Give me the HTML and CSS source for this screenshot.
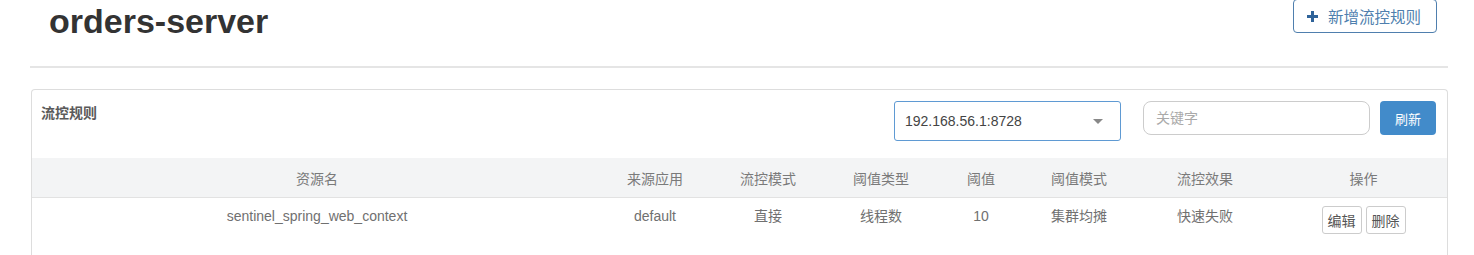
FILE: index.html
```html
<!DOCTYPE html>
<html lang="zh">
<head>
    <meta charset="UTF-8">
    <meta name="viewport" content="width=device-width, initial-scale=1.0">
    <title>orders-server - 流控规则</title>
    <link rel="stylesheet" href="styles.css">
</head>
<body>
    <div class="page-header">
        <h1 class="app-title">orders-server</h1>
        <button class="btn-outline">
            <svg class="plus-icon" width="11" height="11" viewBox="0 0 11 11" aria-hidden="true">
                <rect x="4" y="0" width="3" height="11" fill="currentColor"/>
                <rect x="0" y="4" width="11" height="3" fill="currentColor"/>
            </svg>
            新增流控规则
        </button>
    </div>

    <div class="panel">
        <div class="panel-heading">
            <span class="panel-title">流控规则</span>
            <div class="machine-select">
                <span>192.168.56.1:8728</span>
                <span class="caret"></span>
            </div>
            <input class="search-input" type="text" placeholder="关键字">
            <button class="btn-primary">刷新</button>
        </div>

        <table class="rule-table">
            <colgroup>
                <col style="width: 570px">
                <col style="width: 106px">
                <col style="width: 120px">
                <col style="width: 106px">
                <col style="width: 94px">
                <col style="width: 102px">
                <col style="width: 150px">
                <col>
            </colgroup>
            <thead>
                <tr>
                    <th>资源名</th>
                    <th>来源应用</th>
                    <th>流控模式</th>
                    <th>阈值类型</th>
                    <th>阈值</th>
                    <th>阈值模式</th>
                    <th>流控效果</th>
                    <th>操作</th>
                </tr>
            </thead>
            <tbody>
                <tr>
                    <td>sentinel_spring_web_context</td>
                    <td>default</td>
                    <td>直接</td>
                    <td>线程数</td>
                    <td>10</td>
                    <td>集群均摊</td>
                    <td>快速失败</td>
                    <td>
                        <div class="actions">
                            <button class="btn-small">编辑</button>
                            <button class="btn-small">删除</button>
                        </div>
                    </td>
                </tr>
            </tbody>
        </table>
    </div>
</body>
</html>
```

FILE: styles.css
```css
body {
    margin: 0;
    font-family: "Liberation Sans", Arial, "Noto Sans CJK SC", sans-serif;
    font-size: 14px;
    color: #666;
    background: #fff;
}

.page-header {
    display: flex;
    justify-content: space-between;
    align-items: flex-start;
    height: 66px;
    margin: 0 26px 0 30px;
    padding: 0 11px 0 19px;
    border-bottom: 2px solid #e5e5e5;
}

.app-title {
    margin: 1px 0 0 0;
    font-size: 34px;
    line-height: 40px;
    font-weight: bold;
    color: #333;
}

.btn-outline {
    display: flex;
    align-items: center;
    gap: 10px;
    height: 34px;
    margin-top: -1px;
    padding: 0 15px 0 13px;
    font-family: "Liberation Sans", "Noto Sans CJK SC", sans-serif;
    font-size: 15.5px;
    color: #4f7fae;
    background: #fff;
    border: 1px solid #4f7fae;
    border-radius: 4px;
    cursor: pointer;
}

.plus-icon {
    display: block;
    color: #2f6399;
}

.panel {
    margin: 21px 26px 0 31px;
    border: 1px solid #ddd;
    border-bottom: none;
    border-radius: 4px 4px 0 0;
    height: 170px;
}

.panel-heading {
    display: flex;
    align-items: flex-start;
    padding: 11px 11px 17px 9px;
}

.panel-title {
    margin-right: auto;
    margin-top: 2px;
    font-weight: bold;
    line-height: 20px;
    color: #5a5a5a;
}

.machine-select {
    display: flex;
    align-items: center;
    justify-content: space-between;
    box-sizing: border-box;
    width: 227px;
    height: 40px;
    padding: 0 17px 0 10px;
    border: 1px solid #5f9ad3;
    border-radius: 3px;
    color: #444;
}

.caret {
    width: 0;
    height: 0;
    border-left: 5px solid transparent;
    border-right: 5px solid transparent;
    border-top: 5px solid #888;
}

.search-input {
    box-sizing: border-box;
    width: 227px;
    height: 34px;
    margin-left: 22px;
    padding: 0 12px;
    font-family: "Liberation Sans", "Noto Sans CJK SC", sans-serif;
    font-size: 14px;
    border: 1px solid #ccc;
    border-radius: 8px;
    outline: none;
}

.search-input::placeholder {
    color: #aaa;
}

.btn-primary {
    width: 56px;
    height: 34px;
    margin-left: 10px;
    font-family: "Liberation Sans", "Noto Sans CJK SC", sans-serif;
    font-size: 13px;
    color: #fff;
    background: #428bca;
    border: none;
    border-radius: 4px;
    cursor: pointer;
}

.rule-table {
    width: 100%;
    border-collapse: collapse;
    table-layout: fixed;
}

.rule-table th {
    height: 39px;
    padding: 0;
    font-weight: normal;
    color: #7a7a7a;
    background: #f3f4f5;
    border-bottom: 1px solid #e2e2e2;
    text-align: center;
}

.rule-table td {
    padding: 8px 0;
    line-height: 20px;
    text-align: center;
    vertical-align: top;
    color: #707070;
}

.actions {
    display: flex;
    justify-content: center;
    gap: 4px;
}

.btn-small {
    height: 28px;
    padding: 0 5px;
    font-family: "Liberation Sans", "Noto Sans CJK SC", sans-serif;
    font-size: 14px;
    color: #555;
    background: #fff;
    border: 1px solid #ccc;
    border-radius: 3px;
    cursor: pointer;
}
```
